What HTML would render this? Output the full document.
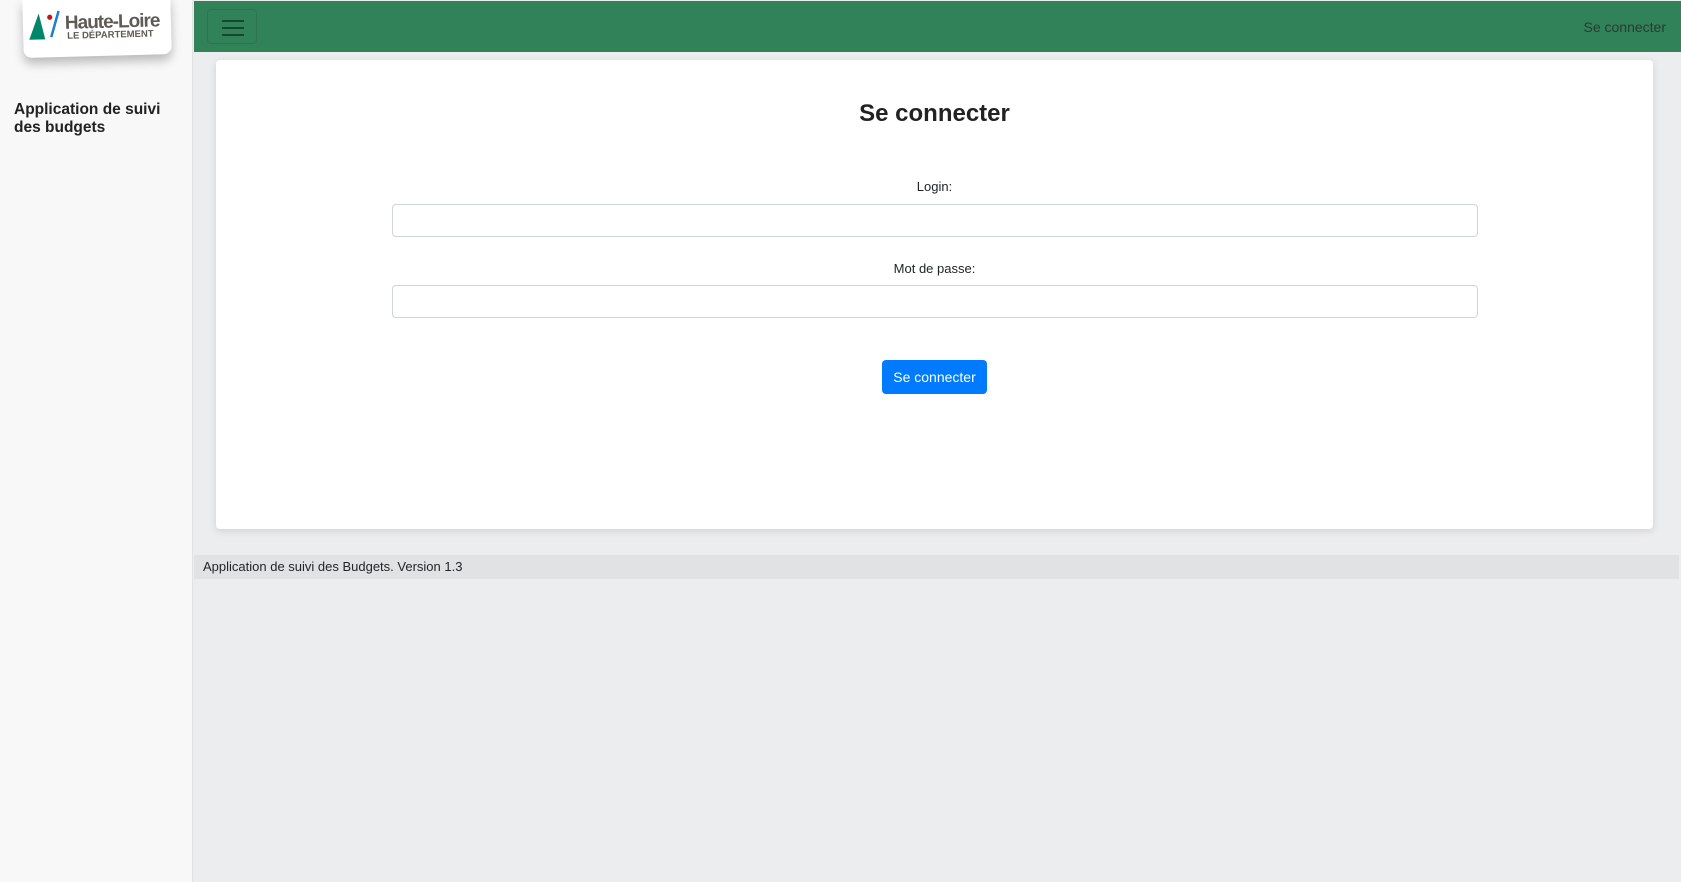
<!DOCTYPE html>
<html><head><meta charset="utf-8"><style>
*{box-sizing:border-box;margin:0;padding:0}
body{width:1681px;height:882px;background:#ecedef;font-family:"Liberation Sans",sans-serif;position:relative;overflow:hidden;color:#212529}
.side{position:absolute;left:0;top:0;width:193px;height:882px;background:#f8f8f8;border-right:1px solid #e2e2e2}
.logo{position:absolute;left:23px;top:-2px;width:148px;height:58px;background:#fff;border-radius:0 0 8px 8px;box-shadow:0 6px 10px rgba(0,0,0,.25);transform:rotate(-1.5deg)}
.stitle{position:absolute;left:14px;top:101px;font-size:15.5px;font-weight:bold;line-height:18px;color:#222}
.head{position:absolute;left:194px;top:1px;width:1487px;height:51px;background:#318259}
.burger{position:absolute;left:13px;top:8px;width:50px;height:35px;border:1px solid rgba(0,0,0,.1);border-radius:4px}
.burger i{position:absolute;left:14px;width:22px;height:2px;background:#1a4630}
.hr{position:absolute;right:15px;top:18px;font-size:14px;color:#2b3a30}
.card{position:absolute;left:216px;top:60px;width:1437px;height:469px;background:#fff;border-radius:4px;box-shadow:0 2px 8px rgba(0,0,0,.12)}
h1{position:absolute;top:40px;width:100%;text-align:center;font-size:24px;font-weight:bold;color:#222}
.lbl{position:absolute;width:100%;text-align:center;font-size:13px}
.inp{position:absolute;left:176px;width:1086px;height:33px;border:1px solid #ced4da;border-radius:4px}
.btn{position:absolute;left:666px;top:300px;width:105px;height:34px;background:#007bff;border-radius:4px;color:#fff;font-size:14px;text-align:center;line-height:34px}
.foot{position:absolute;left:194px;top:555px;width:1485px;height:24px;background:#e1e2e4;font-size:13px;line-height:24px;padding-left:9px}
</style></head><body>
<div class="side">
<div class="logo">
<svg width="148" height="50" viewBox="0 0 148 50"><polygon points="6,40 16,14 22,40" fill="#00876a"/><circle cx="27" cy="18" r="2.6" fill="#c0161c"/><path d="M36 12 L28 38" stroke="#1c7fd0" stroke-width="2.5"/>
<text x="42" y="30" font-family="Liberation Sans" font-size="19" font-weight="bold" fill="#5e5a56" letter-spacing="-1">Haute-Loire</text>
<text x="44" y="40" font-family="Liberation Sans" font-size="9.5" font-weight="bold" fill="#5e5a56">LE DÉPARTEMENT</text></svg>
</div>
<div class="stitle">Application de suivi<br>des budgets</div>
</div>
<div class="head"><div class="burger"><i style="top:10px"></i><i style="top:17px"></i><i style="top:24px"></i></div><div class="hr">Se connecter</div></div>
<div class="card">
<h1>Se connecter</h1>
<div class="lbl" style="top:119px">Login:</div>
<div class="inp" style="top:144px"></div>
<div class="lbl" style="top:201px">Mot de passe:</div>
<div class="inp" style="top:225px"></div>
<div class="btn">Se connecter</div>
</div>
<div class="foot">Application de suivi des Budgets. Version 1.3</div>
</body></html>
